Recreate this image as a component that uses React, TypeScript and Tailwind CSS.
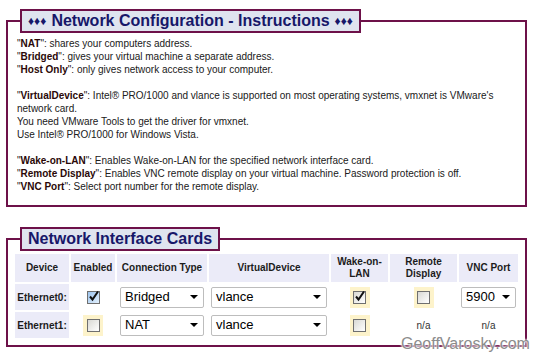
import React from "react";

const FONT = { fontFamily: '"Liberation Sans", Arial, sans-serif' };

function Check({ checked, blue }: { checked?: boolean; blue?: boolean }) {
  return (
    <span
      className={`relative inline-block h-[13px] w-[13px] border border-[#6f6f6f] ${
        blue
          ? "bg-gradient-to-br from-[#9cc4ee] to-[#e3f0fc]"
          : "bg-gradient-to-br from-[#d9d9d4] to-white"
      }`}
    >
      {checked && (
        <svg viewBox="0 0 13 13" className="absolute -left-px -top-[2px] h-[13px] w-[13px]">
          <path d="M3 6.5 L5.5 9.5 L11 1.5" fill="none" stroke="#111" strokeWidth="2" />
        </svg>
      )}
    </span>
  );
}

function YellowCheck({ checked }: { checked?: boolean }) {
  return (
    <div className="mx-auto flex h-[21px] w-[20px] items-center justify-center bg-[#fdf3cb]">
      <Check checked={checked} />
    </div>
  );
}

function Select({ value, width }: { value: string; width: string }) {
  return (
    <div
      className={`${width} mx-auto flex h-[21px] items-center justify-between rounded-[2px] border border-[#bdbdbd] bg-white pl-[4px] pr-[5px] text-[13px] text-black`}
    >
      <span>{value}</span>
      <span className="h-0 w-0 border-l-[4px] border-r-[4px] border-t-[4px] border-l-transparent border-r-transparent border-t-black" />
    </div>
  );
}

const B = ({ children }: { children: React.ReactNode }) => (
  <>
    "<b className="text-[#2a0808]">{children}</b>"
  </>
);

export default function App() {
  const th = "bg-[#ebebf8] px-[2px] text-center align-middle text-[10px] font-bold leading-[12px] text-[#1c1c1c]";
  return (
    <div className="relative h-[357px] w-[541px] overflow-hidden bg-white pt-[9px]" style={FONT}>
      <fieldset className="ml-[6px] w-[521px] border-2 border-[#6d1149] pb-[12px] pl-[9px] pr-[8px]">
        <legend className="ml-[3px] flex h-[24px] items-center border-2 border-[#6d1149] bg-[#dfe4ef] px-[6px] text-[16px] font-bold text-[#171769]">
          <span className="mr-[5px] text-[12px]">♦♦♦</span>
          Network Configuration - Instructions
          <span className="ml-[5px] text-[12px]">♦♦♦</span>
        </legend>
        <div className="pt-[4px] text-[10px] leading-[13px] text-[#202020]">
          <p>
            <B>NAT</B>: shares your computers address.
            <br />
            <B>Bridged</B>: gives your virtual machine a separate address.
            <br />
            <B>Host Only</B>: only gives network access to your computer.
          </p>
          <p className="mt-[13px]">
            <B>VirtualDevice</B>: Intel® PRO/1000 and vlance is supported on most operating systems, vmxnet is VMware's network card.
            <br />
            You need VMware Tools to get the driver for vmxnet.
            <br />
            Use Intel® PRO/1000 for Windows Vista.
          </p>
          <p className="mt-[13px]">
            <B>Wake-on-LAN</B>: Enables Wake-on-LAN for the specified network interface card.
            <br />
            <B>Remote Display</B>: Enables VNC remote display on your virtual machine. Password protection is off.
            <br />
            <B>VNC Port</B>: Select port number for the remote display.
          </p>
        </div>
      </fieldset>

      <fieldset className="ml-[6px] mt-[20px] w-[521px] border-2 border-[#6d1149] pb-[5px] pl-[5px]">
        <legend className="ml-[7px] flex h-[24px] items-center border-2 border-[#6d1149] bg-[#dfe4ef] px-[6px] text-[16px] font-bold text-[#171769]">
          Network Interface Cards
        </legend>
        <table className="mt-px table-fixed border-separate border-spacing-[2px]">
          <colgroup>
            <col className="w-[54px]" />
            <col className="w-[44px]" />
            <col className="w-[90px]" />
            <col className="w-[120px]" />
            <col className="w-[57px]" />
            <col className="w-[67px]" />
            <col className="w-[59px]" />
          </colgroup>
          <thead>
            <tr className="h-[28px]">
              <th className={th}>Device</th>
              <th className={th}>Enabled</th>
              <th className={th}>Connection Type</th>
              <th className={th}>VirtualDevice</th>
              <th className={th}>Wake-on-LAN</th>
              <th className={th}>Remote Display</th>
              <th className={th}>VNC Port</th>
            </tr>
          </thead>
          <tbody className="text-[10px]">
            <tr className="h-[26px]">
              <td className="bg-[#ebebf8] text-center font-bold text-[#1c1c1c]">Ethernet0:</td>
              <td className="text-center">
                <div className="mx-auto flex h-[21px] w-[20px] items-center justify-center">
                  <Check checked blue />
                </div>
              </td>
              <td>
                <Select value="Bridged" width="w-[84px]" />
              </td>
              <td>
                <Select value="vlance" width="w-[116px]" />
              </td>
              <td>
                <YellowCheck checked />
              </td>
              <td>
                <YellowCheck />
              </td>
              <td>
                <Select value="5900" width="w-[55px]" />
              </td>
            </tr>
            <tr className="h-[26px]">
              <td className="bg-[#ebebf8] text-center font-bold text-[#1c1c1c]">Ethernet1:</td>
              <td>
                <YellowCheck />
              </td>
              <td>
                <Select value="NAT" width="w-[84px]" />
              </td>
              <td>
                <Select value="vlance" width="w-[116px]" />
              </td>
              <td>
                <YellowCheck />
              </td>
              <td className="text-center text-[#333]">n/a</td>
              <td className="text-center text-[#333]">n/a</td>
            </tr>
          </tbody>
        </table>
      </fieldset>

      <div className="absolute left-[401px] top-[332px] text-[16px] text-[#8c8c8c] [text-shadow:0_0_2px_#fff,0_0_2px_#fff,0_0_3px_#fff]">
        GeoffVarosky.com
      </div>
    </div>
  );
}
